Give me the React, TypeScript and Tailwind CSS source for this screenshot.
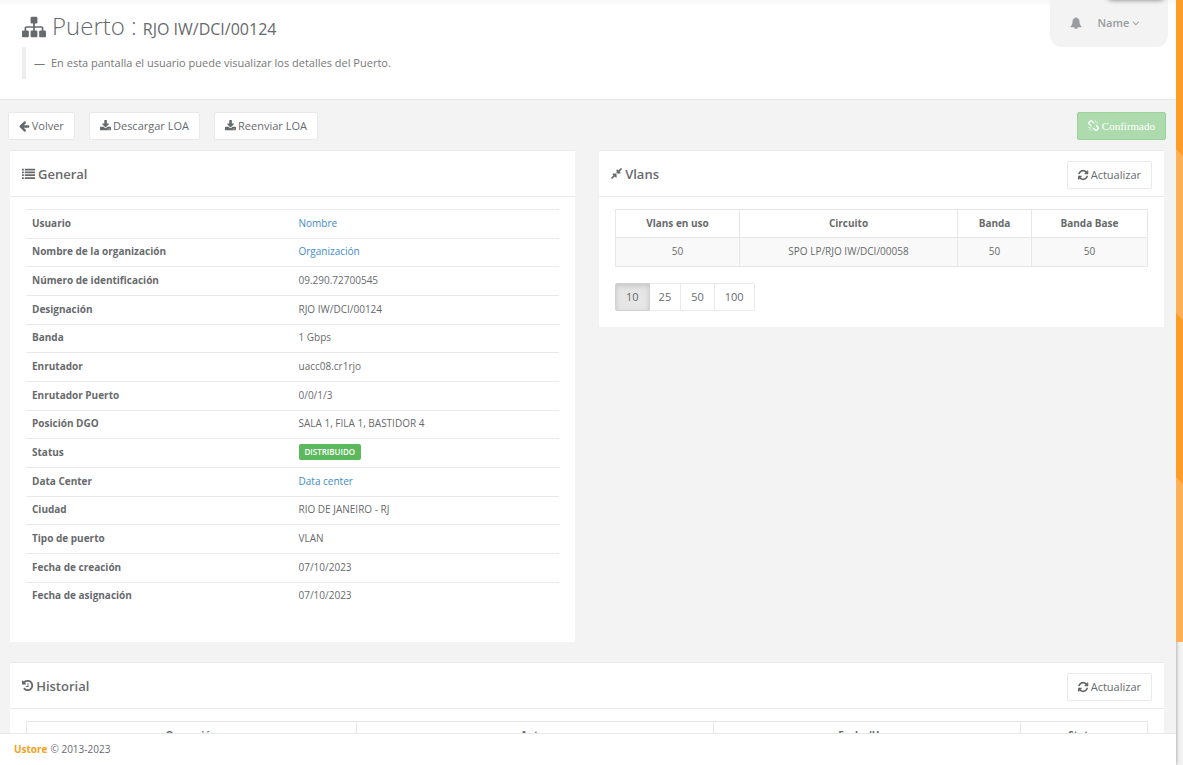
import type { ReactNode } from "react";

type Glyph = { box: string; path: string };

const ICONS = {
  sitemap: {
    box: "0 0 1792 1792",
    path: "M1792 1248v320q0 40-28 68t-68 28h-320q-40 0-68-28t-28-68v-320q0-40 28-68t68-28h96v-192h-512v192h96q40 0 68 28t28 68v320q0 40-28 68t-68 28h-320q-40 0-68-28t-28-68v-320q0-40 28-68t68-28h96v-192h-512v192h96q40 0 68 28t28 68v320q0 40-28 68t-68 28h-320q-40 0-68-28t-28-68v-320q0-40 28-68t68-28h96v-192q0-52 38-90t90-38h512v-192h-96q-40 0-68-28t-28-68v-320q0-40 28-68t68-28h320q40 0 68 28t28 68v320q0 40-28 68t-68 28h-96v192h512q52 0 90 38t38 90v192h96q40 0 68 28t28 68z",
  },
  refresh: {
    box: "128 0 1536 1792",
    path: "M1639 1056q0 5-1 7-64 268-268 434.500t-478 166.500q-146 0-282.500-55t-243.500-157l-129 129q-19 19-45 19t-45-19-19-45v-448q0-26 19-45t45-19h448q26 0 45 19t19 45-19 45l-137 137q71 66 161 102t187 36q134 0 250-65t186-179q11-17 53-117 8-23 30-23h192q13 0 22.500 9.500t9.500 22.500zm25-800v448q0 26-19 45t-45 19h-448q-26 0-45-19t-19-45 19-45l138-138q-148-137-349-137-134 0-250 65t-186 179q-11 17-53 117-8 23-30 23h-199q-13 0-22.500-9.500t-9.500-22.500v-7q65-268 270-434.500t480-166.500q146 0 284 55.500t245 156.500l130-129q19-19 45-19t45 19 19 45z",
  },
  download: {
    box: "64 0 1664 1792",
    path: "M1344 1344q0-26-19-45t-45-19-45 19-19 45 19 45 45 19 45-19 19-45zm256 0q0-26-19-45t-45-19-45 19-19 45 19 45 45 19 45-19 19-45zm128-224v320q0 40-28 68t-68 28h-1472q-40 0-68-28t-28-68v-320q0-40 28-68t68-28h465l135 136q58 56 136 56t136-56l136-136h464q40 0 68 28t28 68zm-325-569q17 41-14 70l-448 448q-18 19-45 19t-45-19l-448-448q-31-29-14-70 17-39 59-39h256v-448q0-26 19-45t45-19h256q26 0 45 19t19 45v448h256q42 0 59 39z",
  },
  back: {
    box: "128 0 1600 1792",
    path: "M1664 896v128q0 53-32.500 90.500t-84.500 37.500h-704l293 294q38 36 38 90t-38 90l-75 76q-37 37-90 37-52 0-91-37l-651-652q-37-37-37-90 0-52 37-91l651-650q38-38 91-38 52 0 90 38l75 74q38 38 38 91t-38 91l-293 293h704q52 0 84.500 37.500t32.500 90.500z",
  },
  list: {
    box: "0 0 1792 1792",
    path: "M0 248h256v240h-256zM0 632h256v240h-256zM0 1016h256v240h-256zM0 1400h256v240h-256zM384 248h1408v240h-1408zM384 632h1408v240h-1408zM384 1016h1408v240h-1408zM384 1400h1408v240h-1408z",
  },
  history: {
    box: "128 0 1536 1792",
    path: "M1664 896q0 156-61 298t-164 245-245 164-298 61q-172 0-327-72.500t-264-204.500q-7-10-6.500-22.500t8.500-20.500l137-138q10-9 25-9 16 2 23 12 73 95 179 147t225 52q104 0 198.500-40.500t163.500-109.500 109.500-163.500 40.500-198.500-40.500-198.500-109.500-163.500-163.500-109.500-198.500-40.500q-98 0-188 35.500t-160 101.500l137 138q31 30 14 69-17 40-59 40h-448q-26 0-45-19t-19-45v-448q0-42 40-59 39-17 69 14l130 129q107-101 244.500-156.500t284.500-55.500q156 0 298 61t245 164 164 245 61 298zm-640-288v448q0 14-9 23t-23 9h-320q-14 0-23-9t-9-23v-64q0-14 9-23t23-9h224v-352q0-14 9-23t23-9h64q14 0 23 9t9 23z",
  },
  compress: {
    box: "128 0 1536 1792",
    path: "M896 960v448q0 26-19 45t-45 19-45-19l-144-144-332 332q-10 10-23 10t-23-10l-114-114q-10-10-10-23t10-23l332-332-144-144q-19-19-19-45t19-45 45-19h448q26 0 45 19t19 45zm755-672q0 13-10 23l-332 332 144 144q19 19 19 45t-19 45-45 19h-448q-26 0-45-19t-19-45v-448q0-26 19-45t45-19 45 19l144 144 332-332q10-10 23-10t23 10l114 114q10 10 10 23z",
  },
  down: {
    box: "320 0 1152 1792",
    path: "M1395 736q0 13-10 23l-466 466q-10 10-23 10t-23-10l-466-466q-10-10-10-23t10-23l50-50q10-10 23-10t23 10l393 393 393-393q10-10 23-10t23 10l50 50q10 10 10 23z",
  },
  bell: {
    box: "0 0 1792 1792",
    path: "M912 1696q0-16-16-16-59 0-101.500-42.500t-42.500-101.500q0-16-16-16t-16 16q0 73 51.500 124.500t124.500 51.500q16 0 16-16zm816-288q0 52-38 90t-90 38h-448q0 106-75 181t-181 75-181-75-75-181h-448q-52 0-90-38t-38-90q50-42 91-88t85-119.500 74.500-158.500 50-206 19.500-260q0-152 117-282.500t307-158.500q-8-19-8-39 0-40 28-68t68-28 68 28 28 68q0 20-8 39 190 28 307 158.500t117 282.500q0 139 19.500 260t50 206 74.500 158.500 85 119.500 91 88z",
  },
  unlink: {
    box: "64 0 1664 1792",
    path: "M503 1271l-256 256q-10 9-23 9-12 0-23-9-9-10-9-23t9-23l256-256q10-9 23-9t23 9q9 10 9 23t-9 23zm169 41v320q0 14-9 23t-23 9-23-9-9-23v-320q0-14 9-23t23-9 23 9 9 23zm-224-224q0 14-9 23t-23 9h-320q-14 0-23-9t-9-23 9-23 23-9h320q14 0 23 9t9 23zm1264 128q0 120-85 203l-147 146q-83 83-203 83-121 0-204-85l-334-335q-21-21-42-56l239-18 273 274q28 28 68 27.500t68-27.500l147-146q28-28 28-67 0-40-28-68l-274-275 18-239q35 21 56 42l336 336q84 86 84 204zm-617-724l-239 18-273-274q-28-28-68-28-39 0-68 27l-147 146q-28 28-28 67 0 40 28 68l274 274-18 240q-35-21-56-42l-336-336q-84-86-84-204 0-120 85-203l147-146q83-83 203-83 121 0 204 85l334 335q21 21 42 56zm633 84q0 14-9 23t-23 9h-320q-14 0-23-9t-9-23 9-23 23-9h320q14 0 23 9t9 23zm-544-544v320q0 14-9 23t-23 9-23-9-9-23v-320q0-14 9-23t23-9 23 9 9 23zm407 151l-256 256q-11 9-23 9t-23-9q-9-10-9-23t9-23l256-256q10-9 23-9t23 9q9 10 9 23t-9 23z",
  },
} satisfies Record<string, Glyph>;

type IconName = keyof typeof ICONS;

function Icon({ name, className = "h-3" }: { name: IconName; className?: string }) {
  return (
    <svg aria-hidden="true" viewBox={ICONS[name].box} fill="currentColor" className={`w-auto shrink-0 ${className}`}>
      <path d={ICONS[name].path} />
    </svg>
  );
}

const BUTTON_SHAPE = "flex h-7 items-center rounded-xs border px-2.5 whitespace-nowrap";
const BUTTON = `${BUTTON_SHAPE} gap-0.5 border-[#e7eaec] bg-white`;

function RefreshButton() {
  return (
    <button type="button" className={BUTTON}>
      <Icon name="refresh" />
      Actualizar
    </button>
  );
}

function Panel({ icon, title, action, className, children }: {
  icon: IconName;
  title: string;
  action?: ReactNode;
  className?: string;
  children: ReactNode;
}) {
  return (
    <section className={`border-t border-[#e7eaec] bg-white ${className ?? ""}`}>
      <header className="flex h-[45px] items-center justify-between px-3">
        <h2 className="flex items-center gap-[3px] text-[13px] font-semibold">
          <Icon name={icon} className="h-[13px]" />
          {title}
        </h2>
        <div className="pt-0.5">{action}</div>
      </header>
      <div className="border-t border-[#e7eaec] px-4 pt-3">{children}</div>
    </section>
  );
}

type Row = { label: string; value: string; kind?: "link" | "badge" };

const DETAILS: Row[] = [
  { label: "Usuario", value: "Nombre", kind: "link" },
  { label: "Nombre de la organización", value: "Organización", kind: "link" },
  { label: "Número de identificación", value: "09.290.72700545" },
  { label: "Designación", value: "RJO IW/DCI/00124" },
  { label: "Banda", value: "1 Gbps" },
  { label: "Enrutador", value: "uacc08.cr1rjo" },
  { label: "Enrutador Puerto", value: "0/0/1/3" },
  { label: "Posición DGO", value: "SALA 1, FILA 1, BASTIDOR 4" },
  { label: "Status", value: "DISTRIBUIDO", kind: "badge" },
  { label: "Data Center", value: "Data center", kind: "link" },
  { label: "Ciudad", value: "RIO DE JANEIRO - RJ" },
  { label: "Tipo de puerto", value: "VLAN" },
  { label: "Fecha de creación", value: "07/10/2023" },
  { label: "Fecha de asignación", value: "07/10/2023" },
];

function DetailValue({ row }: { row: Row }) {
  if (row.kind === "link") {
    return <a href="#" className="text-[#428bca]">{row.value}</a>;
  }
  if (row.kind === "badge") {
    return (
      <span className="block w-fit rounded-xs bg-[#5cb85c] px-1.5 text-[8px] leading-4 font-semibold text-white">
        {row.value}
      </span>
    );
  }
  return <>{row.value}</>;
}

const TABLE = "w-full table-fixed border-collapse text-[10px]";
const CELL = "border border-[#e7e7e7] px-2 pb-0.5";

export default function App() {
  return (
    <div className="flex h-screen overflow-hidden bg-[#f3f3f4] font-['Open_Sans',sans-serif] text-[11px] leading-4 text-[#676a6c]">
      <div className="flex min-w-0 flex-1 flex-col bg-[#f3f3f3] shadow-[0_0_4px_rgba(0,0,0,0.4)]">
        <main className="min-h-0 flex-1 overflow-hidden">
          <header className="flex h-[100px] items-start justify-between border-b border-[#e7eaec] bg-white bg-linear-to-b from-[#f8f8f8] to-white to-8% pr-2 pl-[22px]">
            <div>
              <h1 className="flex h-[47px] items-baseline gap-1.5 pt-2.5 pb-1 text-2xl font-light">
                <Icon name="sitemap" className="h-6 self-center" />
                <span>Puerto :</span>
                <small className="text-base font-normal">RJO IW/DCI/00124</small>
              </h1>
              <blockquote className="flex h-8 items-center gap-1.5 border-l-4 border-[#eee] pl-2 text-[#777]">
                <span>—</span>
                En esta pantalla el usuario puede visualizar los detalles del Puerto.
              </blockquote>
            </div>
            <nav className="relative flex h-[47px] w-[118px] items-center justify-between overflow-hidden rounded-b-xl bg-[#f3f3f3] pr-7 pb-0.5 pl-5 font-semibold text-[#999c9e]">
              <div className="absolute -top-2 right-1 h-2 w-14 rounded-full shadow-[0_0_5px_rgba(0,0,0,0.5)]" />
              <button type="button" aria-label="Notificaciones">
                <Icon name="bell" />
              </button>
              <button type="button" className="flex items-center gap-[3px]">
                Name
                <Icon name="down" />
              </button>
            </nav>
          </header>

          <div className="flex h-[50px] items-center gap-3.5 pt-0.5 pr-2.5 pl-2">
            <button type="button" className={BUTTON}><Icon name="back" />Volver</button>
            <button type="button" className={BUTTON}><Icon name="download" />Descargar LOA</button>
            <button type="button" className={BUTTON}><Icon name="download" />Reenviar LOA</button>
            <button type="button" disabled className={`ml-auto gap-[3px] border-[#9ad29a] bg-[#addbad] font-['Liberation_Serif',serif] text-white ${BUTTON_SHAPE}`}>
              <Icon name="unlink" />
              Confirmado
            </button>
          </div>

          <div className="grid grid-cols-2 items-start gap-6 pr-3 pl-2.5">
            <Panel icon="list" title="General" className="pb-8">
              <table className={`h-[401px] ${TABLE}`}>
                <tbody>
                  {DETAILS.map((row) => (
                    <tr key={row.label} className="border-t border-[#e7eaec]">
                      <th scope="row" className="w-1/2 px-1.5 pb-0.5 text-left font-bold">{row.label}</th>
                      <td className="px-1.5 pb-0.5"><DetailValue row={row} /></td>
                    </tr>
                  ))}
                </tbody>
              </table>
            </Panel>

            <Panel icon="compress" title="Vlans" action={<RefreshButton />} className="pb-4">
              <table className={`text-center ${TABLE}`}>
                <thead>
                  <tr className="h-7">
                    <th className={`w-[23.3%] ${CELL}`}>Vlans en uso</th>
                    <th className={`w-[41%] ${CELL}`}>Circuito</th>
                    <th className={`w-[13.9%] ${CELL}`}>Banda</th>
                    <th className={CELL}>Banda Base</th>
                  </tr>
                </thead>
                <tbody>
                  <tr className="h-[29px] bg-[#f9f9f9]">
                    <td className={CELL}>50</td>
                    <td className={CELL}>SPO LP/RJO IW/DCI/00058</td>
                    <td className={CELL}>50</td>
                    <td className={CELL}>50</td>
                  </tr>
                </tbody>
              </table>
              <div className="mt-4 flex">
                <button type="button" aria-pressed="true" className="h-7 rounded-l-xs border border-[#d2d2d2] bg-[#e6e6e6] px-2.5 shadow-[inset_0_2px_5px_rgba(0,0,0,0.15)]">10</button>
                <button type="button" className="h-7 border-y border-r border-[#e7eaec] px-[9px]">25</button>
                <button type="button" className="h-7 border-y border-r border-[#e7eaec] px-2.5">50</button>
                <button type="button" className="h-7 rounded-r-xs border-y border-r border-[#e7eaec] px-2.5">100</button>
              </div>
            </Panel>
          </div>

          <div className="pt-5 pr-3 pl-2.5">
            <Panel icon="history" title="Historial" action={<RefreshButton />}>
              <table className={`text-center ${TABLE}`}>
                <thead>
                  <tr className="h-7">
                    <th className={`w-[29.4%] ${CELL}`}>Operación</th>
                    <th className={`w-[31.9%] ${CELL}`}>Autor</th>
                    <th className={`w-[27.4%] ${CELL}`}>Fecha/Hora</th>
                    <th className={CELL}>Status</th>
                  </tr>
                </thead>
              </table>
            </Panel>
          </div>
        </main>
        <footer className="flex h-8 shrink-0 items-center gap-[3px] border-t border-[#e7eaec] bg-white px-3.5 pb-0.5 text-[10px]">
          <strong className="text-[#f8a01c]">Ustore</strong> © 2013-2023
        </footer>
      </div>
      <aside className="relative w-[7px] shrink-0">
        <svg aria-hidden="true" viewBox="0 0 7 642" className="h-[642px] w-full">
          <path fill="#ff9c27" d="M0 0h7v642h-7z" />
          <path fill="#ffb057" d="M0 149l7 7v164l-7-7zM0 477l7 7v158h-7z" />
        </svg>
      </aside>
    </div>
  );
}
